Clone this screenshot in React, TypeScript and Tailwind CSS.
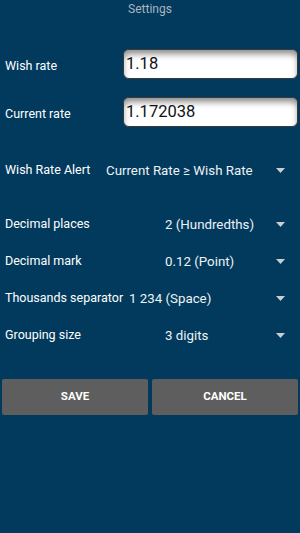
const font = { fontFamily: 'Roboto, "Noto Sans", sans-serif' };

function Caret() {
  return (
    <svg width="9" height="5" viewBox="0 0 9 5" aria-hidden="true">
      <path d="M0 0h9L4.5 5z" fill="#c9ced3" />
    </svg>
  );
}

function RateRow({ label, value }: { label: string; value: string }) {
  return (
    <div className="flex items-center h-[30px]">
      <span className="w-[123px] shrink-0 pl-[5px] pt-[5px] text-[12.5px] text-white">{label}</span>
      <div className="flex-1 mr-[2px] h-[30px] flex items-center rounded-[6px] border border-[#3a3a3a] bg-white pl-[2px] text-[16.5px] text-[#111] shadow-[inset_0_5px_6px_-1px_rgba(0,0,0,0.45)]">
        {value}
      </div>
    </div>
  );
}

function SpinnerRow({ label, value, labelWidth }: { label: string; value: string; labelWidth: string }) {
  return (
    <div className="flex items-center h-[37px] pl-[5px] pr-[15px] text-[12.5px]">
      <span className={`${labelWidth} shrink-0 text-white`}>{label}</span>
      <span className="flex-1 text-[13.3px] text-[#eef2f5] whitespace-nowrap">{value}</span>
      <Caret />
    </div>
  );
}

export default function App() {
  return (
    <div className="w-[300px] h-[533px] bg-[#023a5e] flex flex-col" style={font}>
      <div className="h-[18px] flex items-center justify-center text-[12px] text-[#a9b5c0]">Settings</div>

      <div className="mt-[31px] flex flex-col gap-[18px]">
        <RateRow label="Wish rate" value="1.18" />
        <RateRow label="Current rate" value="1.172038" />
      </div>

      <div className="mt-[25px]">
        <SpinnerRow label="Wish Rate Alert" value="Current Rate ≥ Wish Rate" labelWidth="w-[101px]" />
      </div>

      <div className="mt-[17px]">
        <SpinnerRow label="Decimal places" value="2 (Hundredths)" labelWidth="w-[160px]" />
        <SpinnerRow label="Decimal mark" value="0.12 (Point)" labelWidth="w-[160px]" />
        <SpinnerRow label="Thousands separator" value="1 234 (Space)" labelWidth="w-[124px]" />
        <SpinnerRow label="Grouping size" value="3 digits" labelWidth="w-[160px]" />
      </div>

      <div className="mt-[25px] flex gap-[4px] px-[2px]">
        <button type="button" className="flex-1 h-[36px] rounded-[2px] bg-[#5e5e5e] text-white text-[11.5px] font-bold">
          SAVE
        </button>
        <button type="button" className="flex-1 h-[36px] rounded-[2px] bg-[#5e5e5e] text-white text-[11.5px] font-bold">
          CANCEL
        </button>
      </div>
    </div>
  );
}
